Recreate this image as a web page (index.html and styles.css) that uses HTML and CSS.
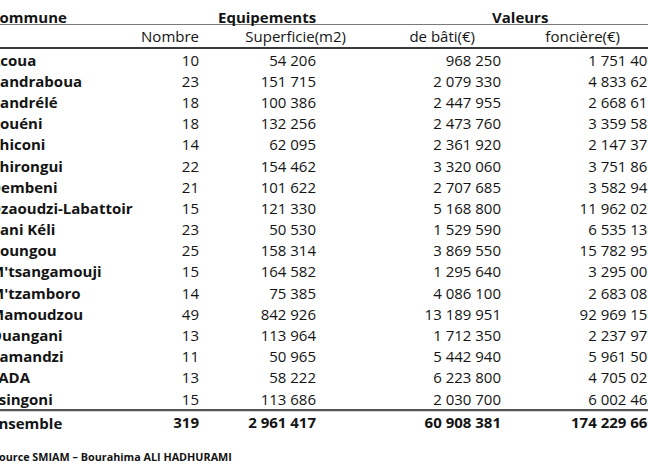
FILE: index.html
```html
<!DOCTYPE html>
<html lang="fr">
<head>
<meta charset="utf-8">
<title>Equipements et valeurs</title>
<link rel="stylesheet" href="styles.css">
</head>
<body>
<div class="sheet">
<table class="grid">
<colgroup>
<col class="c1"><col class="c2"><col class="c3"><col class="c4"><col class="c5">
</colgroup>
<thead>
<tr class="h1">
<th class="name">Commune</th>
<th colspan="2" class="grp-eq">Equipements</th>
<th colspan="2" class="grp-val">Valeurs</th>
</tr>
<tr class="h2">
<th></th>
<th class="hn">Nombre</th>
<th class="hs">Superficie(m2)</th>
<th class="hb">de bâti(€)</th>
<th class="hf">foncière(€)</th>
</tr>
</thead>
<tbody>
<tr><td class="name">Acoua</td><td class="n">10</td><td class="s">54 206</td><td class="b">968 250</td><td class="f">1 751 400</td></tr>
<tr><td class="name">Bandraboua</td><td class="n">23</td><td class="s">151 715</td><td class="b">2 079 330</td><td class="f">4 833 620</td></tr>
<tr><td class="name">Bandrélé</td><td class="n">18</td><td class="s">100 386</td><td class="b">2 447 955</td><td class="f">2 668 610</td></tr>
<tr><td class="name">Bouéni</td><td class="n">18</td><td class="s">132 256</td><td class="b">2 473 760</td><td class="f">3 359 580</td></tr>
<tr><td class="name">Chiconi</td><td class="n">14</td><td class="s">62 095</td><td class="b">2 361 920</td><td class="f">2 147 370</td></tr>
<tr><td class="name">Chirongui</td><td class="n">22</td><td class="s">154 462</td><td class="b">3 320 060</td><td class="f">3 751 860</td></tr>
<tr><td class="name">Dembeni</td><td class="n">21</td><td class="s">101 622</td><td class="b">2 707 685</td><td class="f">3 582 940</td></tr>
<tr><td class="name">Dzaoudzi-Labattoir</td><td class="n">15</td><td class="s">121 330</td><td class="b">5 168 800</td><td class="f">11 962 020</td></tr>
<tr><td class="name">Kani Kéli</td><td class="n">23</td><td class="s">50 530</td><td class="b">1 529 590</td><td class="f">6 535 130</td></tr>
<tr><td class="name">Koungou</td><td class="n">25</td><td class="s">158 314</td><td class="b">3 869 550</td><td class="f">15 782 950</td></tr>
<tr><td class="name">M'tsangamouji</td><td class="n">15</td><td class="s">164 582</td><td class="b">1 295 640</td><td class="f">3 295 000</td></tr>
<tr><td class="name">M'tzamboro</td><td class="n">14</td><td class="s">75 385</td><td class="b">4 086 100</td><td class="f">2 683 080</td></tr>
<tr><td class="name">Mamoudzou</td><td class="n">49</td><td class="s">842 926</td><td class="b">13 189 951</td><td class="f">92 969 150</td></tr>
<tr><td class="name">Ouangani</td><td class="n">13</td><td class="s">113 964</td><td class="b">1 712 350</td><td class="f">2 237 970</td></tr>
<tr><td class="name">Pamandzi</td><td class="n">11</td><td class="s">50 965</td><td class="b">5 442 940</td><td class="f">5 961 500</td></tr>
<tr><td class="name">SADA</td><td class="n">13</td><td class="s">58 222</td><td class="b">6 223 800</td><td class="f">4 705 020</td></tr>
<tr class="last"><td class="name">Tsingoni</td><td class="n">15</td><td class="s">113 686</td><td class="b">2 030 700</td><td class="f">6 002 460</td></tr>
</tbody>
<tfoot>
<tr class="total"><td class="name">Ensemble</td><td class="n">319</td><td class="s">2 961 417</td><td class="b">60 908 381</td><td class="f">174 229 660</td></tr>
</tfoot>
</table>
<p class="source">Source SMIAM – Bourahima ALI HADHURAMI</p>
</div>
</body>
</html>
```
FILE: styles.css
```css
html, body {
  margin: 0;
  padding: 0;
  background: #ffffff;
}
body {
  width: 648px;
  height: 470px;
  overflow: hidden;
  font-family: "Open Sans", "Liberation Sans", sans-serif;
  font-size: 15px;
  color: #141414;
}
.sheet {
  margin-left: -8px;
  width: 690px;
}
.grid {
  border-collapse: collapse;
  table-layout: fixed;
  width: 690px;
}
.c1 { width: 128px; }
.c2 { width: 84px; }
.c3 { width: 147px; }
.c4 { width: 155px; }
.c5 { width: 176px; }

th, td {
  padding: 0;
  white-space: nowrap;
  line-height: 18px;
}
th { font-weight: bold; }

.h1 th {
  height: 24px;
  line-height: 14px;
  vertical-align: bottom;
  padding-bottom: 0;
  border-bottom: 1px solid #7a7a7a;
  text-align: left;
}
.h1 .name { text-indent: -2px; }
.grp-eq { padding-left: 98px; }
.grp-val { padding-left: 141px; }

.h2 th {
  height: 22px;
  font-weight: normal;
  text-align: right;
  vertical-align: middle;
  border-bottom: 2px solid #3a3a3a;
}
.hn { padding-right: 5px; }
.hs { padding-right: 5px; }
.hb { padding-right: 31px; }
.hf { padding-right: 62px; }

tbody td, tfoot td {
  height: 21.2px;
  vertical-align: middle;
  text-align: right;
}
td.name {
  text-align: left;
  font-weight: bold;
  text-indent: -2px;
}
td.n { padding-right: 5px; }
td.s { padding-right: 35px; }
td.b { padding-right: 5px; }
td.f { padding-right: 26px; }

.last td { border-bottom: 2px solid #555555; }
.total td {
  font-weight: bold;
  box-shadow: inset 0 1px 0 #d2d2d2;
}
.total td.name { padding-top: 1px; }

.source {
  margin: 16px 0 0 1px;
  font-weight: bold;
  font-size: 10.8px;
}
```
